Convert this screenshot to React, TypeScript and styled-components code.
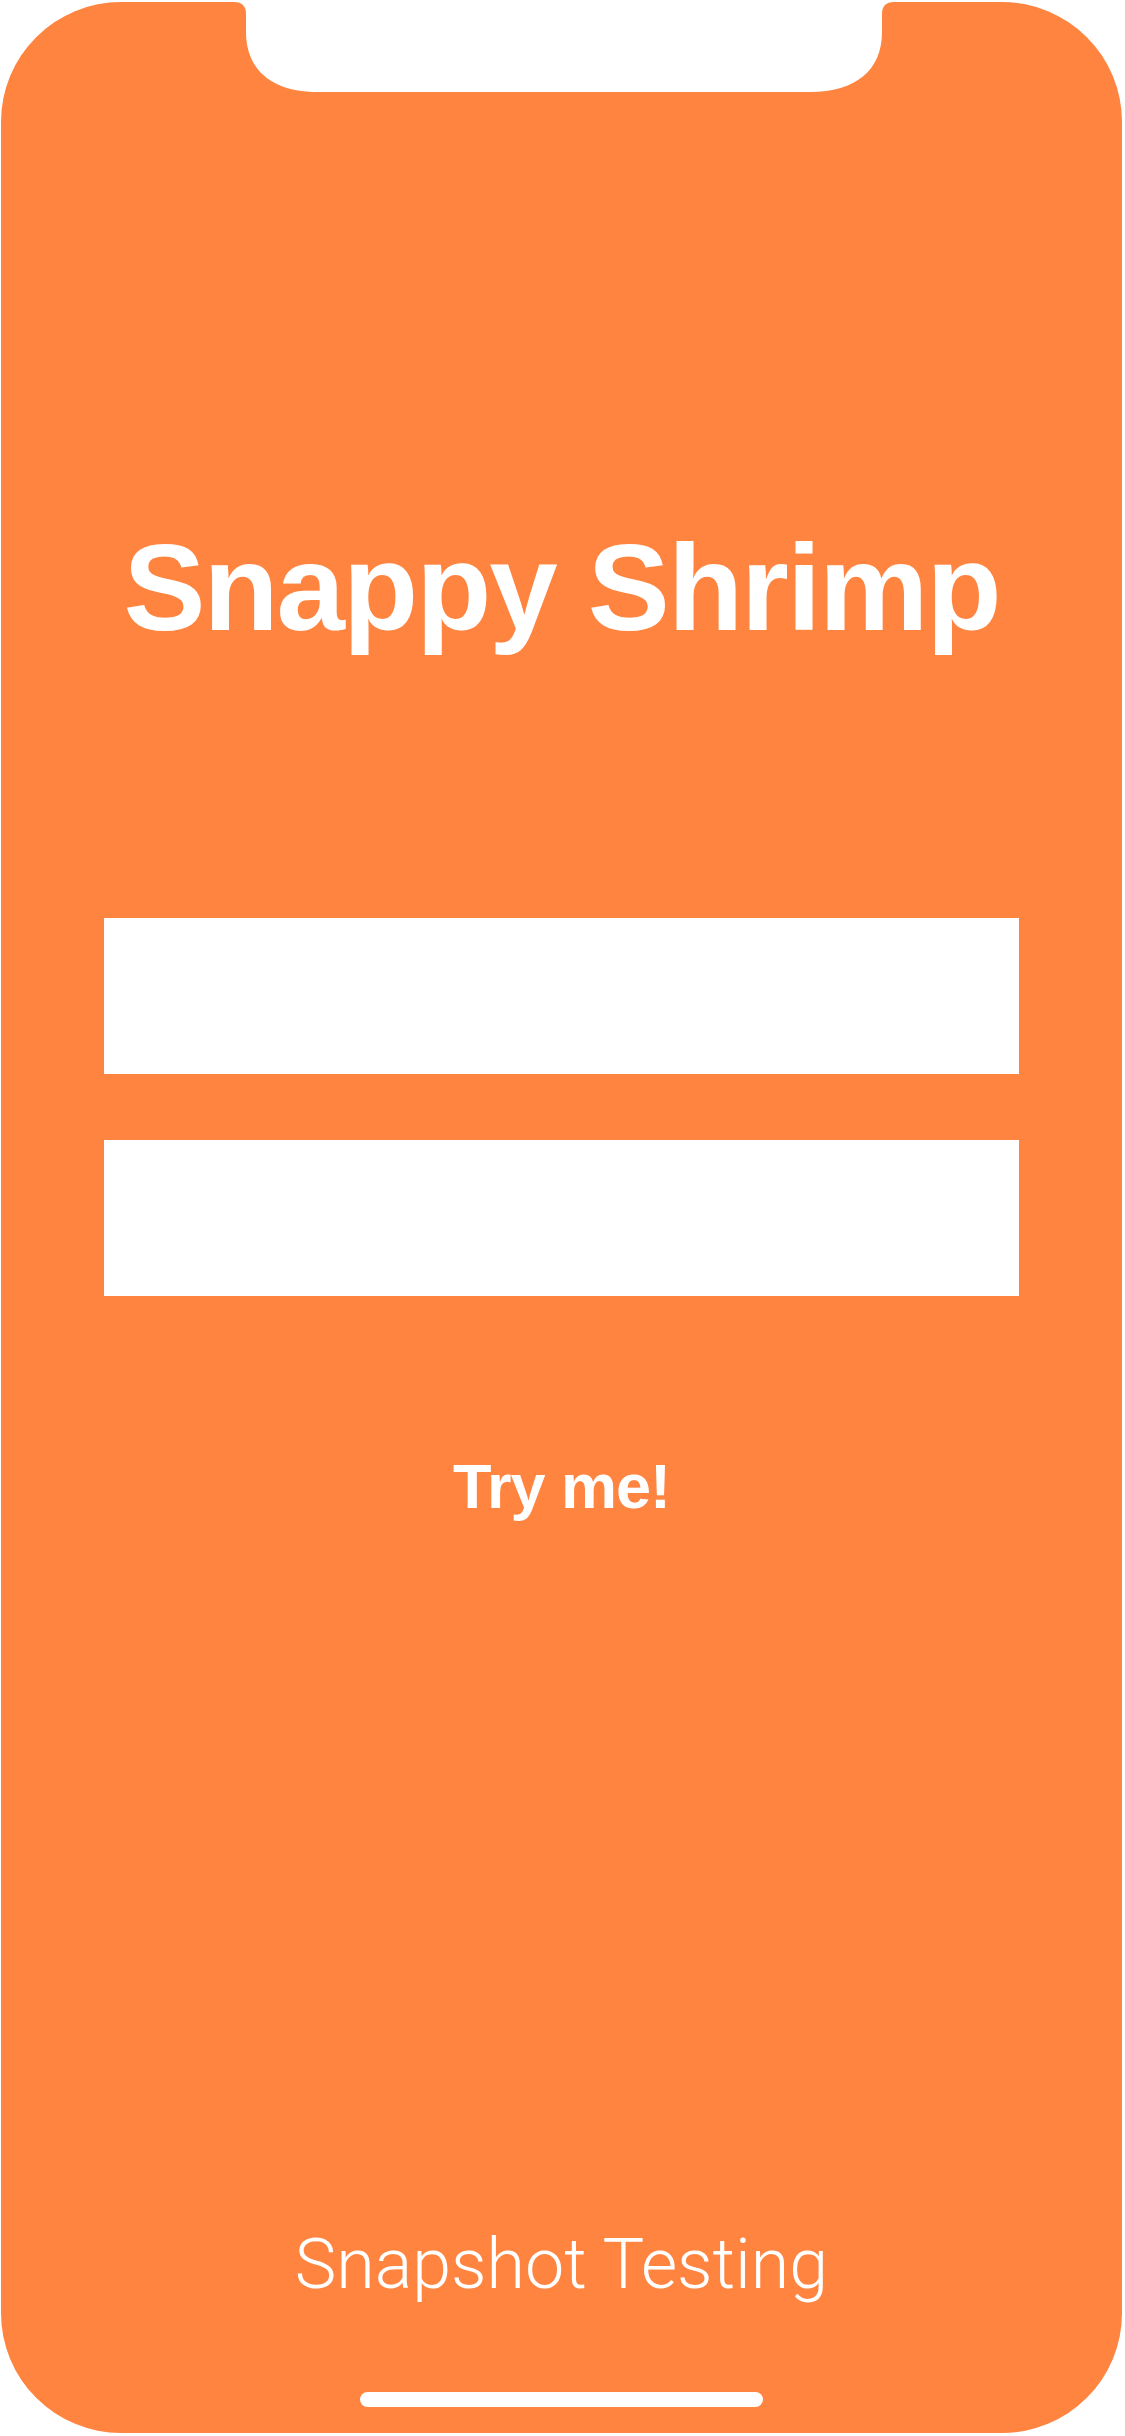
import React from "react";
import styled, { createGlobalStyle } from "styled-components";

const GlobalStyle = createGlobalStyle`
  html, body {
    margin: 0;
    padding: 0;
    background: #ffffff;
  }
  * { box-sizing: border-box; }
`;

const Page = styled.div`
  width: 1125px;
  height: 2436px;
  padding: 2px 3px 3px 1px;
  background: #ffffff;
`;

const Screen = styled.main`
  position: relative;
  height: 100%;
  background: #ff8440;
  border-radius: 120px;
  display: flex;
  flex-direction: column;
  align-items: center;
`;

const Notch = styled.svg`
  position: absolute;
  top: -2px;
  left: -1px;
  width: 1125px;
  height: 100px;
  display: block;
`;

const Title = styled.h1`
  margin: 524px 0 0;
  font-family: "Liberation Sans", Arial, sans-serif;
  font-weight: 700;
  font-size: 123px;
  line-height: 123px;
  letter-spacing: -2px;
  color: #ffffff;
`;

const Form = styled.form`
  margin-top: 269px;
  display: flex;
  flex-direction: column;
  gap: 66px;
`;

const Field = styled.input`
  display: block;
  width: 915px;
  height: 156px;
  margin: 0;
  border: none;
  outline: none;
  padding: 0 30px;
  background: #ffffff;
  font-family: "Liberation Sans", Arial, sans-serif;
  font-size: 54px;
`;

const TryButton = styled.button`
  margin-top: 159px;
  padding: 0;
  border: none;
  background: transparent;
  font-family: "Liberation Sans", Arial, sans-serif;
  font-weight: 700;
  font-size: 63px;
  line-height: 63px;
  letter-spacing: -1px;
  color: #ffffff;
  cursor: pointer;
`;

const Footer = styled.footer`
  margin-top: auto;
  display: flex;
  flex-direction: column;
  align-items: center;
  padding-bottom: 26px;
`;

const Caption = styled.div`
  font-family: Roboto, "Liberation Sans", sans-serif;
  font-weight: 300;
  font-size: 70px;
  line-height: 70px;
  color: #ffffff;
`;

const HomeIndicator = styled.div`
  margin-top: 93px;
  width: 403px;
  height: 15px;
  border-radius: 8px;
  background: #ffffff;
`;

export default function App() {
  return (
    <>
      <GlobalStyle />
      <Page>
        <Screen>
          <Notch viewBox="0 0 1125 100" aria-hidden="true">
            <path
              d="M 220 0 L 220 2 L 234 2 Q 246 2 246 14 L 246 32 C 246 70 272 92 318 92 L 810 92 C 856 92 882 70 882 32 L 882 14 Q 882 2 894 2 L 906 2 L 906 0 Z"
              fill="#ffffff"
            />
          </Notch>
          <Title>Snappy Shrimp</Title>
          <Form onSubmit={(e) => e.preventDefault()}>
            <Field type="text" aria-label="First field" />
            <Field type="text" aria-label="Second field" />
          </Form>
          <TryButton type="button">Try me!</TryButton>
          <Footer>
            <Caption>Snapshot Testing</Caption>
            <HomeIndicator />
          </Footer>
        </Screen>
      </Page>
    </>
  );
}
